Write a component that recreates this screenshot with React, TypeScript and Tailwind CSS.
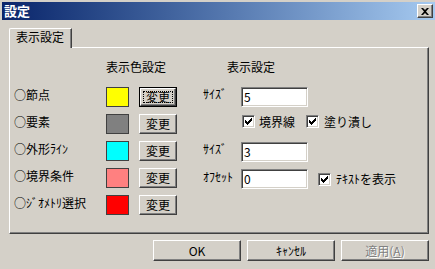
import React from "react";

const raised =
  "border border-t-white border-l-white border-r-[#404040] border-b-[#404040] shadow-[inset_-1px_-1px_0_#808080,inset_1px_1px_0_#d4d0c8] bg-[#d4d0c8]";
const sunken =
  "border border-t-[#808080] border-l-[#808080] border-r-white border-b-white shadow-[inset_1px_1px_0_#404040,inset_-1px_-1px_0_#d4d0c8] bg-white";

const colorRows = [
  { label: "○節点", color: "#ffff00", focused: true },
  { label: "○要素", color: "#808080" },
  { label: "○外形ﾗｲﾝ", color: "#00ffff" },
  { label: "○境界条件", color: "#ff8080" },
  { label: "○ｼﾞｵﾒﾄﾘ選択", color: "#ff0000" },
];

function Checkbox() {
  return (
    <div className={`flex h-[13px] w-[13px] shrink-0 items-center justify-center ${sunken}`}>
      <svg width="7" height="7" viewBox="0 0 7 7">
        <path d="M0 2h1v1h1v1h1V3h1V2h1V1h1V0h1v3H6v1H5v1H4v1H3v1H2V6H1V5H0z" fill="#000" />
      </svg>
    </div>
  );
}

function ChangeButton({ focused }: { focused?: boolean }) {
  if (focused) {
    return (
      <div className="ml-[10px] h-[20px] w-[38px] border border-black">
        <div className={`flex h-full w-full items-center justify-center p-[2px] ${raised}`}>
          <div className="flex h-full w-full items-center justify-center border border-dotted border-black">
            変更
          </div>
        </div>
      </div>
    );
  }
  return (
    <div className={`ml-[10px] flex h-[20px] w-[38px] items-center justify-center ${raised}`}>
      変更
    </div>
  );
}

function Field({ value }: { value: string }) {
  return (
    <div className={`h-[20px] w-[67px] pl-[2px] pt-[2px] ${sunken}`}>{value}</div>
  );
}

export default function App() {
  return (
    <div className="h-[269px] w-[435px] overflow-hidden bg-[#d4d0c8] pl-[2px] pt-[2px] font-['Noto_Sans_CJK_JP',sans-serif] text-[12px] leading-[14px] text-black">
      {/* title bar */}
      <div className="flex h-[18px] items-center justify-between bg-gradient-to-r from-[#0a246a] to-[#a6caf0] pl-[2px] pr-[2px]">
        <span className="text-[13px] font-bold text-white">設定</span>
        <div className={`flex h-[14px] w-[16px] items-center justify-center ${raised}`}>
          <svg width="8" height="7" viewBox="0 0 8 7">
            <path d="M0 0h2l2 2 2-2h2L5 3.5 8 7H6L4 5 2 7H0l3-3.5z" fill="#000" />
          </svg>
        </div>
      </div>

      <div className="pl-[7px] pr-[6px]">
        {/* tab */}
        <div className="relative z-10 -mb-[1px] mt-[8px] flex">
          <div className="h-[20px] w-[63px] rounded-tl-[2px] border-l border-t border-r border-l-white border-t-white border-r-[#404040] bg-[#d4d0c8] pl-[6px] pt-[1px] shadow-[inset_-1px_0_0_#808080]">
            表示設定
          </div>
        </div>

        {/* panel */}
        <div className="flex h-[187px] w-[420px] border border-l-white border-t-white border-r-[#404040] border-b-[#404040] pl-[4px] pt-[12px] shadow-[inset_-1px_-1px_0_#808080]">
          {/* color settings */}
          <div className="w-[189px]">
            <div className="pl-[92px]">表示色設定</div>
            <div className="mt-[13px] flex flex-col gap-[7px]">
              {colorRows.map((row) => (
                <div key={row.label} className="flex h-[20px] items-start">
                  <div className="w-[92px] pt-[1px]">{row.label}</div>
                  <div
                    className="h-[20px] w-[23px] border border-[#404040]"
                    style={{ backgroundColor: row.color }}
                  />
                  <ChangeButton focused={row.focused} />
                </div>
              ))}
            </div>
          </div>

          {/* display settings */}
          <div>
            <div className="pl-[24px]">表示設定</div>
            <div className="mt-[13px] flex h-[20px] items-start">
              <div className="w-[38px]">ｻｲｽﾞ</div>
              <Field value="5" />
            </div>
            <div className="mt-[8px] flex h-[13px] items-center pl-[39px]">
              <Checkbox />
              <span className="ml-[4px]">境界線</span>
              <span className="ml-[11px]">
                <Checkbox />
              </span>
              <span className="ml-[5px]">塗り潰し</span>
            </div>
            <div className="mt-[14px] flex h-[20px] items-start">
              <div className="w-[38px]">ｻｲｽﾞ</div>
              <Field value="3" />
            </div>
            <div className="mt-[7px] flex h-[20px] items-start">
              <div className="w-[38px] pt-[1px]">ｵﾌｾｯﾄ</div>
              <Field value="0" />
              <div className="ml-[10px] flex h-[20px] items-center">
                <Checkbox />
                <span className="ml-[5px]">ﾃｷｽﾄを表示</span>
              </div>
            </div>
          </div>
        </div>

        {/* dialog buttons */}
        <div className="mt-[6px] flex justify-end gap-[6px]">
          <div className={`flex h-[21px] w-[88px] items-center justify-center ${raised}`}>OK</div>
          <div className={`flex h-[21px] w-[88px] items-center justify-center ${raised}`}>ｷｬﾝｾﾙ</div>
          <div
            className={`flex h-[21px] w-[88px] items-center justify-center text-[#808080] [text-shadow:1px_1px_0_#fff] ${raised}`}
          >
            適用(<span className="underline">A</span>)
          </div>
        </div>
      </div>
    </div>
  );
}
